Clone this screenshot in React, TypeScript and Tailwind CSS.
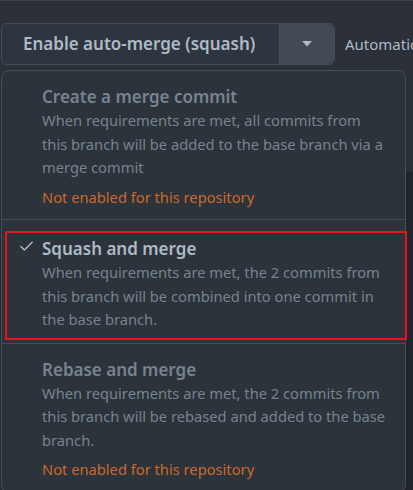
import { Check } from "lucide-react";

type Option = {
  title: string;
  desc: string;
  disabled?: boolean;
  selected?: boolean;
};

const options: Option[] = [
  {
    title: "Create a merge commit",
    desc: "When requirements are met, all commits from this branch will be added to the base branch via a merge commit",
    disabled: true,
  },
  {
    title: "Squash and merge",
    desc: "When requirements are met, the 2 commits from this branch will be combined into one commit in the base branch.",
    selected: true,
  },
  {
    title: "Rebase and merge",
    desc: "When requirements are met, the 2 commits from this branch will be rebased and added to the base branch.",
    disabled: true,
  },
];

function Item({ o }: { o: Option }) {
  return (
    <div
      className={
        o.selected
          ? "ml-[3px] mr-[-2px] mt-[11px] mb-[3px] flex border-2 border-[#e5141c] pt-[4px] pb-[6px] pr-2"
          : "flex pt-[14px] pb-[10px] pr-[17px]"
      }
    >
      <div className={o.selected ? "w-[35px] shrink-0 pl-[11px] pt-[1px]" : "w-[40px] shrink-0"}>
        {o.selected && <Check size={17} strokeWidth={2} className="text-[#adbac7]" />}
      </div>
      <div className="min-w-0">
        <div
          className={
            "text-[17px] font-semibold leading-[24px] " +
            (o.selected ? "text-[#adbac7]" : "text-[#768390]")
          }
        >
          {o.title}
        </div>
        <div className="text-[14.7px] leading-[23.5px] text-[#768390]">{o.desc}</div>
        {o.disabled && (
          <div className="mt-[6px] text-[14.7px] leading-[23.5px] text-[#c96a2b]">
            Not enabled for this repository
          </div>
        )}
      </div>
    </div>
  );
}

export default function App() {
  return (
    <div
      className="relative h-[490px] w-[413px] overflow-hidden bg-[#2b3039]"
      style={{ fontFamily: '"Noto Sans", "Open Sans", Arial, sans-serif' }}
    >
      <div className="h-[2px] border-t border-[#3e444d]" />
      <div className="mt-[21px] flex items-center">
        <div className="ml-[1px] flex h-[42px] rounded-md border border-[#444c56]">
          <button className="w-[277px] rounded-l-md bg-[#2f353e] pl-[21px] text-left text-[17px] font-semibold text-[#adbac7]">
            Enable auto-merge (squash)
          </button>
          <button className="flex w-[55px] items-center justify-center rounded-r-md border-l border-[#444c56] bg-[#434a54]">
            <svg width="10" height="6" viewBox="0 0 10 6">
              <path d="M0 0h10L5 5.5z" fill="#adbac7" />
            </svg>
          </button>
        </div>
        <span className="ml-[10px] whitespace-nowrap text-[15px] text-[#adbac7]">Automatic</span>
      </div>

      <div className="absolute right-0 top-[172px] h-[320px] w-[8px] bg-[#22272e]" />

      <div className="absolute left-[1px] top-[70px] w-[405px] rounded-lg border border-[#444c56] bg-[#2d333b] shadow-lg">
        <Item o={options[0]} />
        <div className="border-t border-[#444c56]" />
        <Item o={options[1]} />
        <div className="border-t border-[#444c56]" />
        <Item o={options[2]} />
      </div>
    </div>
  );
}
